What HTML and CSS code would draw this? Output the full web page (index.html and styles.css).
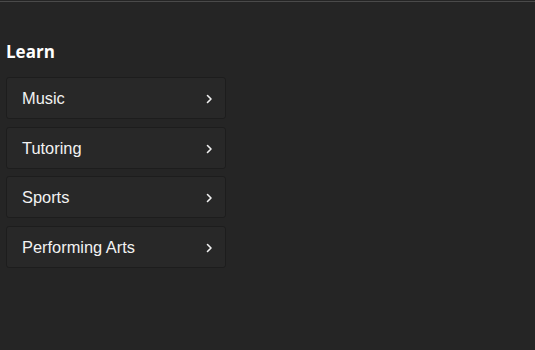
FILE: index.html
```html
<!DOCTYPE html>
<html>
<head>
    <title>Learn</title>
    <link rel="stylesheet" href="styles.css">
</head>
<body>
    <div class="topline"></div>
    <div class="container">
        <h1>Learn</h1>
        <ul class="menu">
            <li class="menu-item">
                <span>Music</span>
                <svg class="chevron" width="7" height="10" viewBox="0 0 7 10"><polyline points="1.5,1.5 5,5 1.5,8.5"/></svg>
            </li>
            <li class="menu-item">
                <span>Tutoring</span>
                <svg class="chevron" width="7" height="10" viewBox="0 0 7 10"><polyline points="1.5,1.5 5,5 1.5,8.5"/></svg>
            </li>
            <li class="menu-item">
                <span>Sports</span>
                <svg class="chevron" width="7" height="10" viewBox="0 0 7 10"><polyline points="1.5,1.5 5,5 1.5,8.5"/></svg>
            </li>
            <li class="menu-item">
                <span>Performing Arts</span>
                <svg class="chevron" width="7" height="10" viewBox="0 0 7 10"><polyline points="1.5,1.5 5,5 1.5,8.5"/></svg>
            </li>
        </ul>
    </div>
</body>
</html>
```

FILE: styles.css
```css
body {
    margin: 0;
    padding: 0;
    background-color: #252525;
    font-family: 'Liberation Sans', Arial, sans-serif;
    color: #f2f2f2;
    min-height: 100vh;
}

.topline {
    height: 1px;
    margin-top: 1px;
    background-color: #4a4a4a;
}

.container {
    width: 220px;
    padding: 0 6px;
}

h1 {
    font-family: 'Open Sans', sans-serif;
    font-size: 17px;
    font-weight: bold;
    color: #ffffff;
    margin: 38px 0 0;
    line-height: 24px;
}

.menu {
    list-style: none;
    margin: 13px 0 0;
    padding: 0;
    display: flex;
    flex-direction: column;
    gap: 7.5px;
}

.menu-item {
    height: 42px;
    box-sizing: border-box;
    border: 1px solid #1d1d1d;
    border-radius: 3px;
    background-color: #282828;
    display: flex;
    align-items: center;
    justify-content: space-between;
    padding: 1px 12px 0 15px;
    font-size: 16.4px;
}

.chevron {
    fill: none;
    stroke: #f0f0f0;
    stroke-width: 1.6;
    stroke-linecap: round;
    stroke-linejoin: round;
    margin-top: 1px;
}
```
